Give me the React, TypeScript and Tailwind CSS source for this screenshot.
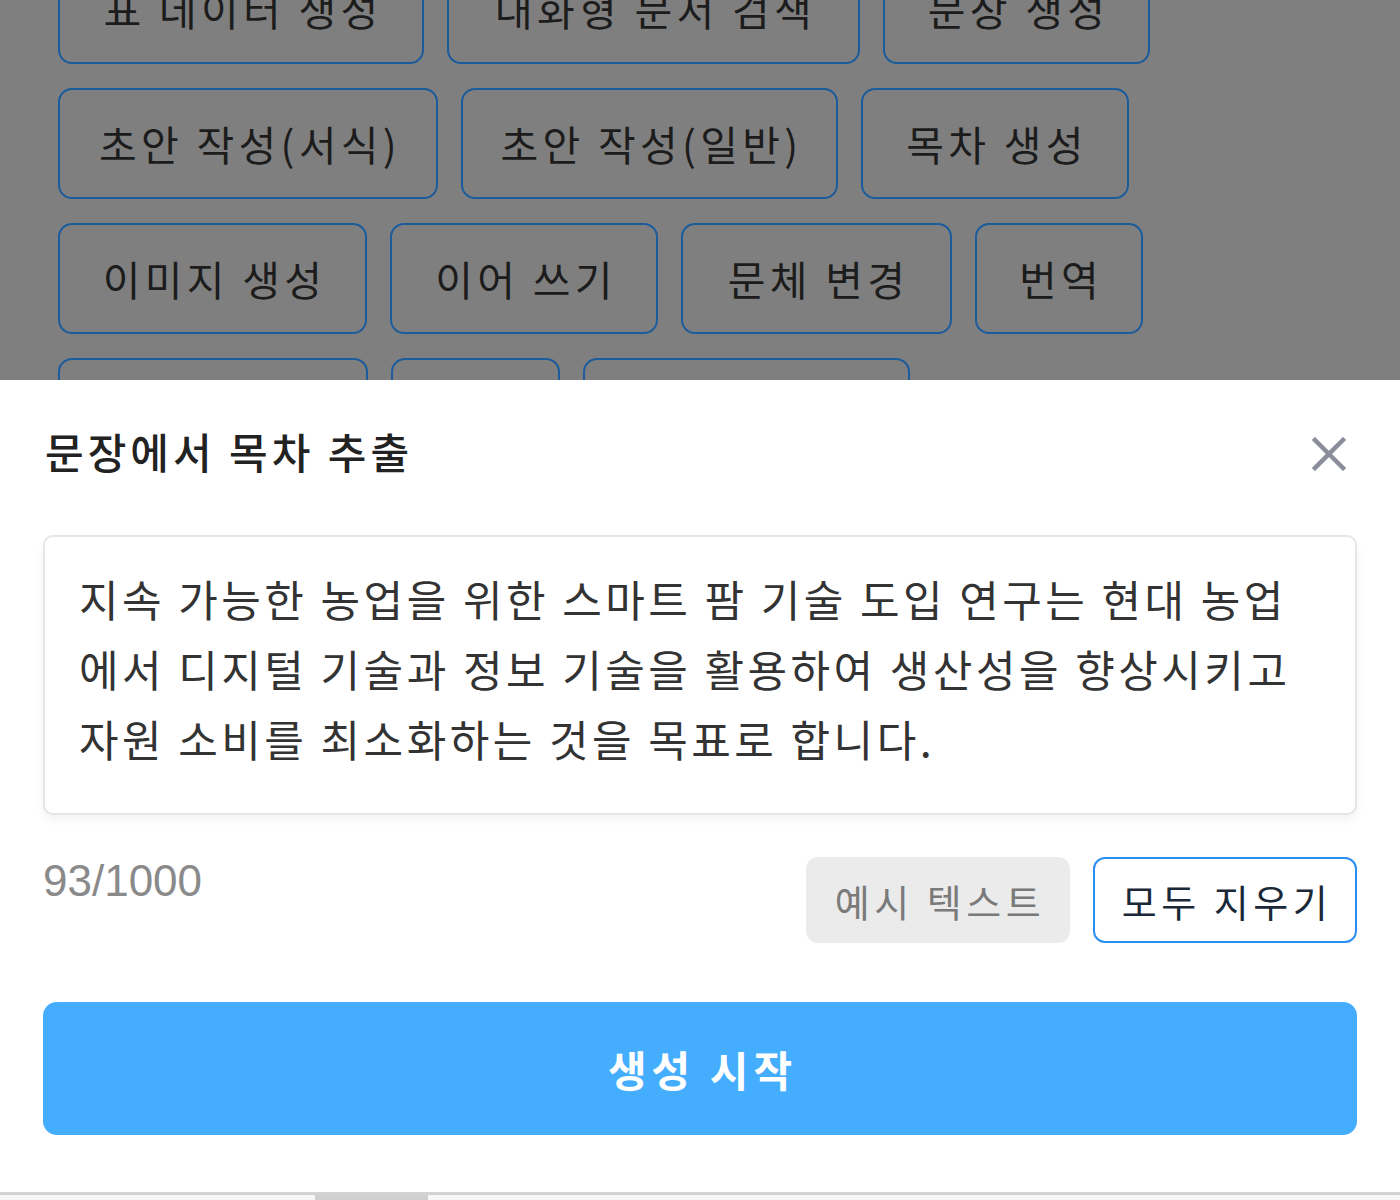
const font = { fontFamily: '"Noto Sans CJK KR", "Noto Sans", sans-serif' };

type Chip = { label: string; w: string };

const rows: Chip[][] = [
  [
    { label: "표 데이터 생성", w: "w-[366px]" },
    { label: "대화형 문서 검색", w: "w-[413px]" },
    { label: "문장 생성", w: "w-[267px]" },
  ],
  [
    { label: "초안 작성(서식)", w: "w-[380px]" },
    { label: "초안 작성(일반)", w: "w-[377px]" },
    { label: "목차 생성", w: "w-[268px]" },
  ],
  [
    { label: "이미지 생성", w: "w-[309px]" },
    { label: "이어 쓰기", w: "w-[268px]" },
    { label: "문체 변경", w: "w-[271px]" },
    { label: "번역", w: "w-[168px]" },
  ],
  // 시트에 가려지는 줄 (테두리 윗부분만 보임)
  [
    { label: "", w: "w-[310px]" },
    { label: "", w: "w-[169px]" },
    { label: "", w: "w-[327px]" },
  ],
];

const lines = [
  "지속 가능한 농업을 위한 스마트 팜 기술 도입 연구는 현대 농업",
  "에서 디지털 기술과 정보 기술을 활용하여 생산성을 향상시키고",
  "자원 소비를 최소화하는 것을 목표로 합니다.",
];

const App = () => {
  return (
    <div className="w-[1400px] h-[1200px] flex flex-col bg-white overflow-hidden" style={font}>
      {/* 뒤쪽 메뉴 (딤 처리) */}
      <div className="h-[380px] bg-[#7f7f7f] overflow-hidden shrink-0">
        <div className="-mt-[47px] pl-[58px] flex flex-col gap-[24px]">
          {rows.map((row, i) => (
            <div key={i} className="flex gap-[23px]">
              {row.map((c, j) => (
                <div
                  key={j}
                  className={`${c.w} h-[111px] shrink-0 flex items-center justify-center rounded-[14px] border-2 border-[#1b5c9c] pl-[4px] text-[41px] tracking-[4.3px] text-[#1c1c1c] whitespace-nowrap`}
                >
                  {c.label}
                </div>
              ))}
            </div>
          ))}
        </div>
      </div>

      {/* 바텀 시트 */}
      <div className="flex-1 flex flex-col px-[43px] pt-[41px]">
        <div className="h-[60px] flex items-center justify-between">
          <h2 className="text-[42px] font-medium tracking-[4px] text-[#222] leading-[50px] pl-[2px]">문장에서 목차 추출</h2>
          <button className="w-[40px] h-[40px] mr-[8px] mt-[6px] flex items-center justify-center">
            <svg width="34" height="34" viewBox="0 0 34 34">
              <path d="M3 3 L31 31 M31 3 L3 31" stroke="#8b8d9a" strokeWidth="4.5" strokeLinecap="square" />
            </svg>
          </button>
        </div>

        <div className="mt-[54px] h-[280px] rounded-[10px] border-2 border-[#e6e6e6] bg-white shadow-[0_5px_8px_rgba(0,0,0,0.05)] pl-[34px] pt-[26px]">
          {lines.map((l) => (
            <div key={l} className="text-[43px] leading-[70px] tracking-[3.5px] text-[#333] whitespace-nowrap">
              {l}
            </div>
          ))}
        </div>

        <div className="mt-[42px] flex items-start">
          <div
            className="mt-[2px] text-[44px] leading-[44px] text-[#8a8a8a]"
            style={{ fontFamily: '"Liberation Sans", Arial, sans-serif' }}
          >
            93/1000
          </div>
          <div className="ml-auto flex gap-[23px]">
            <button className="w-[264px] h-[86px] rounded-[12px] bg-[#ebebeb] pl-[4px] text-[38px] tracking-[4.5px] text-[#7a7a7a]">
              예시 텍스트
            </button>
            <button className="w-[264px] h-[86px] rounded-[12px] bg-white border-2 border-[#2a8ff0] pl-[4px] text-[38px] tracking-[4.5px] text-[#1b2838]">
              모두 지우기
            </button>
          </div>
        </div>

        <button className="mt-[59px] h-[133px] w-full rounded-[14px] bg-[#45adfe] pl-[5px] text-[42px] font-bold tracking-[5px] text-white">
          생성 시작
        </button>
      </div>

      {/* 하단 스크롤 바 */}
      <div className="h-[8px] shrink-0 border-t-[3px] border-[#d3d3d3] bg-[#f7f7f7] flex">
        <div className="ml-[315px] w-[113px] bg-[#d0d0d0]" />
      </div>
    </div>
  );
};

export default App;
